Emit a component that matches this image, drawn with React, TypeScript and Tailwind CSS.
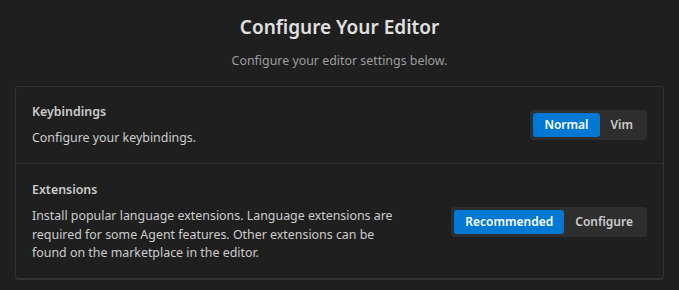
import React, { useState } from 'react';

const SegToggle: React.FC<{ options: string[]; value: string; onChange: (v: string) => void }> = ({ options, value, onChange }) => (
  <div className="flex shrink-0 rounded-[4px] bg-[#2e2e2e] p-[3px]">
    {options.map((o) => (
      <button
        key={o}
        onClick={() => onChange(o)}
        className={
          o === value
            ? 'h-6 rounded-[3px] bg-[#0078d4] px-[11px] text-[12px] font-semibold text-white'
            : 'h-6 rounded-[3px] px-[11px] text-[12px] font-semibold text-[#cccccc]'
        }
      >
        {o}
      </button>
    ))}
  </div>
);

export default function App() {
  const [keys, setKeys] = useState('Normal');
  const [ext, setExt] = useState('Recommended');

  return (
    <div className="h-[290px] w-full bg-[#1f1f1f] px-[15px] pt-[13px] text-[#cccccc]" style={{ fontFamily: '"Noto Sans", "Open Sans", sans-serif' }}>
      <h1 className="text-center text-[19px] font-semibold leading-[28px] text-[#e0e0e0]">Configure Your Editor</h1>
      <p className="mt-[11px] text-center text-[12.4px] leading-[18px] text-[#9d9d9d]">Configure your editor settings below.</p>

      <div className="mt-[16px] rounded-[4px] border border-b-2 border-[#333333]">
        <div className="flex items-center justify-between border-b border-[#333333] px-4 pb-[16px] pt-[16px]">
          <div>
            <div className="text-[12.4px] font-semibold leading-[18px]">Keybindings</div>
            <div className="mt-[8px] text-[12.4px] leading-[18px]">Configure your keybindings.</div>
          </div>
          <SegToggle options={['Normal', 'Vim']} value={keys} onChange={setKeys} />
        </div>

        <div className="flex items-center justify-between px-4 pb-[15px] pt-[17px]">
          <div className="max-w-[362px]">
            <div className="text-[12.4px] font-semibold leading-[18px]">Extensions</div>
            <div className="mt-[8px] text-[12.4px] leading-[18.5px]">
              Install popular language extensions. Language extensions are required for some Agent features. Other extensions can be found on the marketplace in the editor.
            </div>
          </div>
          <SegToggle options={['Recommended', 'Configure']} value={ext} onChange={setExt} />
        </div>
      </div>
    </div>
  );
}
